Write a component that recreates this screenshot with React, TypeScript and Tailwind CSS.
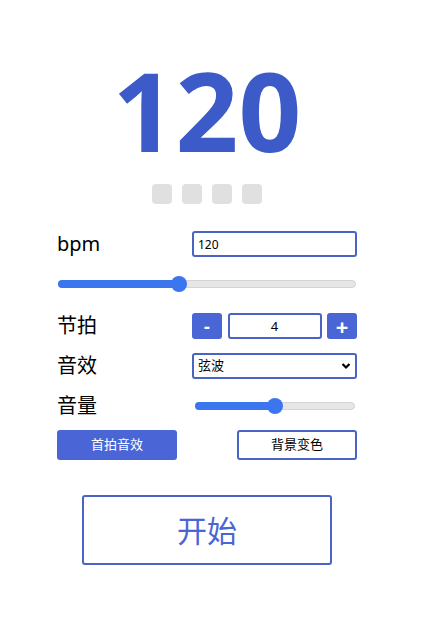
import { useState } from "react";

const cjk = { fontFamily: '"Noto Sans", "Noto Sans CJK SC", sans-serif' };

const Slider = ({ percent, className }: { percent: number; className: string }) => (
  <div className={`relative h-[16px] ${className}`}>
    <div className="absolute left-0 right-0 top-[4px] h-[8px] rounded-full border border-[#d4d4d4] bg-[#e6e6e6]" />
    <div
      className="absolute left-0 top-[4px] h-[8px] rounded-full bg-[#3b76ef]"
      style={{ width: `${percent}%` }}
    />
    <div
      className="absolute top-0 h-[16px] w-[16px] -translate-x-1/2 rounded-full bg-[#3b76ef]"
      style={{ left: `${percent}%` }}
    />
  </div>
);

export default function App() {
  const [beats, setBeats] = useState(4);

  return (
    <div className="w-[414px] bg-white text-black" style={cjk}>
      <div className="mx-auto flex w-[300px] flex-col">
        <div className="mt-[44px] text-center text-[110px] font-bold leading-[130px] text-[#3c5ac8]">
          120
        </div>

        <div className="mt-[10px] flex justify-center gap-[10px]">
          {[0, 1, 2, 3].map((i) => (
            <div key={i} className="h-[20px] w-[20px] rounded-[4px] bg-[#e0e0e0]" />
          ))}
        </div>

        <div className="mt-[27px] flex h-[26px] items-center justify-between">
          <span className="text-[20px]">bpm</span>
          <input
            readOnly
            value="120"
            className="h-[26px] w-[165px] rounded-[3px] border-2 border-[#4a64c6] px-[4px] text-[12px] outline-none"
          />
        </div>

        <Slider percent={40.5} className="mx-[1px] mt-[19px]" />

        <div className="mt-[21px] flex h-[26px] items-center justify-between">
          <span className="text-[20px]">节拍</span>
          <div className="flex w-[165px] items-center justify-between">
            <button
              onClick={() => setBeats(beats - 1)}
              className="flex h-[26px] w-[30px] items-center justify-center rounded-[3px] bg-[#4a66d6] text-[18px] font-bold leading-none text-white"
            >
              -
            </button>
            <input
              readOnly
              value={beats}
              className="h-[26px] w-[94px] rounded-[3px] border-2 border-[#4a64c6] text-center text-[13px] outline-none"
            />
            <button
              onClick={() => setBeats(beats + 1)}
              className="flex h-[26px] w-[30px] items-center justify-center rounded-[3px] bg-[#4a66d6] text-[22px] font-bold leading-none text-white"
            >
              +
            </button>
          </div>
        </div>

        <div className="mt-[14px] flex h-[26px] items-center justify-between">
          <span className="text-[20px]">音效</span>
          <div className="relative flex h-[26px] w-[165px] items-center rounded-[3px] border-2 border-[#4a64c6] px-[4px] text-[13px]">
            <span>弦波</span>
            <svg
              className="absolute right-[4px] top-[7px]"
              width="10"
              height="8"
              viewBox="0 0 10 8"
              fill="none"
              stroke="#000"
              strokeWidth="2.2"
            >
              <path d="M1.5 2 5 5.5 8.5 2" />
            </svg>
          </div>
        </div>

        <div className="mt-[14px] flex h-[26px] items-center justify-between">
          <span className="text-[20px]">音量</span>
          <Slider percent={50} className="mr-[2px] w-[160px]" />
        </div>

        <div className="mt-[11px] flex justify-between">
          <button className="h-[30px] w-[120px] rounded-[3px] bg-[#4a66d6] text-[13px] text-white">
            首拍音效
          </button>
          <button className="h-[30px] w-[120px] rounded-[3px] border-2 border-[#4a64c6] bg-white text-[13px] text-black">
            背景变色
          </button>
        </div>

        <button className="mx-auto mt-[35px] h-[70px] w-[250px] rounded-[3px] border-2 border-[#4a64c6] bg-white text-[30px] text-[#4a66d6]">
          开始
        </button>
      </div>
    </div>
  );
}
